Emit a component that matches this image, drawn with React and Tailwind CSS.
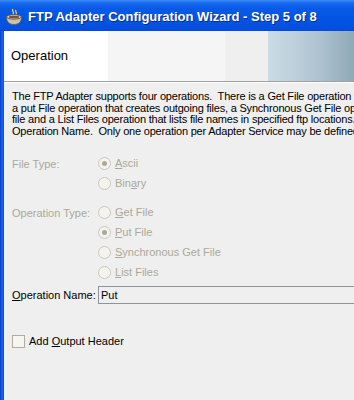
import React from 'react';

const CupIcon = () => (
  <svg width="18" height="18" viewBox="0 0 18 18">
    <path d="M8 1c-2 2 2 3 0 5M11 2c-1.5 1.5 1.5 2.5 0 4" stroke="#f0d060" strokeWidth="1.3" fill="none" />
    <ellipse cx="9" cy="9" rx="7.5" ry="2.2" fill="#e8e4d8" stroke="#6b5a3a" strokeWidth="0.8" />
    <path d="M1.5 9c0 5 3 7.5 7.5 7.5s7.5-2.5 7.5-7.5c-1 1.5-4 2.2-7.5 2.2S2.5 10.5 1.5 9z" fill="#c9c2ae" stroke="#6b5a3a" strokeWidth="0.8" />
    <ellipse cx="9" cy="9" rx="5.5" ry="1.3" fill="#7a5230" />
  </svg>
);

const Radio = ({ checked }) => (
  <span className="w-[13px] h-[13px] rounded-full border border-[#cac8bb] bg-[#f4f3ee] flex items-center justify-center shrink-0">
    {checked && <span className="w-[5px] h-[5px] rounded-full bg-[#aca899]" />}
  </span>
);

const RadioRow = ({ checked, children }) => (
  <div className="flex items-center gap-[4px] h-[20px]">
    <Radio checked={checked} />
    <span className="text-[#aca899]">{children}</span>
  </div>
);

const lines = [
  'The FTP Adapter supports four operations.  There is a Get File operation that polls for incoming files,',
  'a put File operation that creates outgoing files, a Synchronous Get File operation that reads a single',
  'file and a List Files operation that lists file names in specified ftp locations.  Select an operation and',
  'Operation Name.  Only one operation per Adapter Service may be defined.',
];

export default function App() {
  return (
    <div className="w-[354px] h-[400px] flex flex-col overflow-hidden bg-[#efefef]" style={{ fontFamily: '"Liberation Sans", Arial, sans-serif' }}>
      {/* Title bar */}
      <div className="h-[31px] shrink-0 flex items-center gap-[5px] pl-[5px] pt-[3px] bg-[linear-gradient(to_bottom,#3c8ef5_0px,#1a6bf0_3px,#0a5ae8_8px,#0353e2_20px,#0450e0_28px,#0a48d6_31px)]">
        <CupIcon />
        <span className="text-white text-[13px] font-bold whitespace-nowrap [text-shadow:1px_1px_0_#0a2a9a]">
          FTP Adapter Configuration Wizard - Step 5 of 8
        </span>
      </div>

      <div className="flex-1 flex min-h-0">
        {/* Left frame */}
        <div className="w-[4px] shrink-0 bg-[linear-gradient(to_right,#0838c8,#1768ee,#0a4ee0)]" />

        <div className="flex-1 flex flex-col min-w-0">
          {/* Header */}
          <div className="h-[51px] shrink-0 flex bg-white border-b border-[#a0a0a0]">
            <div className="w-[104px] flex items-center pl-[7px] text-[13px] text-black">Operation</div>
            <div className="w-[117px] bg-[#f5f5f5]" />
            <div className="w-[43px] bg-[#efefef]" />
            <div className="flex-1 bg-[linear-gradient(to_right,#cadde6,#bdd0db_30%,#aec2cf_60%,#8fa9b8)]" />
          </div>
          <div className="h-px bg-white" />

          {/* Body */}
          <div className="flex-1 flex flex-col pl-[8px] pt-[8px] text-[11px] text-black">
            <div className="leading-[11.5px] whitespace-pre tracking-[-0.2px]">
              {lines.map((l) => (
                <div key={l}>{l}</div>
              ))}
            </div>

            <div className="flex mt-[16px]">
              <div className="w-[86px] text-[#aca899] pt-[3px]">File Type:</div>
              <div className="flex flex-col">
                <RadioRow checked><u>A</u>scii</RadioRow>
                <RadioRow>Bin<u>a</u>ry</RadioRow>
              </div>
            </div>

            <div className="flex mt-[9px]">
              <div className="w-[86px] text-[#aca899] pt-[3px]">Operation Type:</div>
              <div className="flex flex-col">
                <RadioRow><u>G</u>et File</RadioRow>
                <RadioRow checked><u>P</u>ut File</RadioRow>
                <RadioRow><u>S</u>ynchronous Get File</RadioRow>
                <RadioRow><u>L</u>ist Files</RadioRow>
              </div>
            </div>

            <div className="flex items-center mt-[4px]">
              <div className="w-[86px]"><u>O</u>peration Name:</div>
              <div className="flex-1 h-[18px] border border-[#8e949c] border-r-0 bg-[#efefef] flex items-center pl-[2px]">Put</div>
            </div>

            <div className="flex items-center gap-[4px] mt-[29px]">
              <span className="w-[13px] h-[13px] border border-[#b0ada0] bg-[#f6f5f0] shrink-0" />
              <span>Add <u>O</u>utput Header</span>
            </div>
          </div>
        </div>
      </div>
    </div>
  );
}
